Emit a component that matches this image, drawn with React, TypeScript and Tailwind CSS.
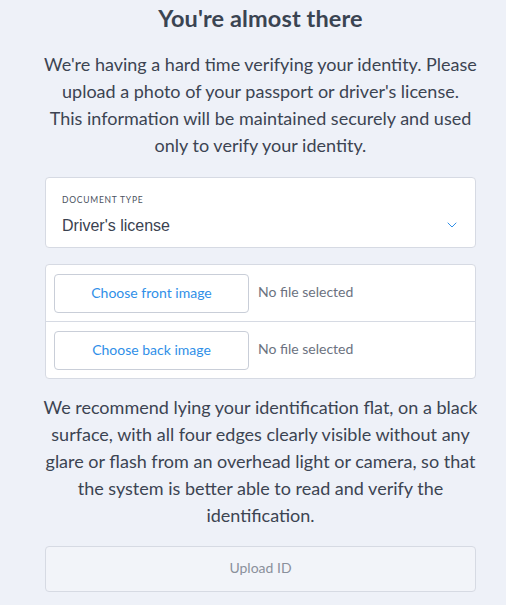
import { ChevronDown } from 'lucide-react';

const sans = "font-['Lato','Open_Sans',sans-serif]";

function FileRow({ label }: { label: string }) {
    return (
        <div className="flex h-[56px] items-center px-[8px]">
            <button className="h-[39px] w-[195px] rounded-[4px] border border-[#c9ced8] bg-white pb-[1px] text-[14px] text-[#2f8fe8]">
                {label}
            </button>
            <span className="ml-[9px] pb-[3px] text-[14px] text-[#6b7280]">No file selected</span>
        </div>
    );
}

export default function App() {
    return (
        <div className={`min-h-[605px] w-[506px] bg-[#eef1f8] pl-[45px] text-[#3c4452] ${sans}`}>
            <div className="w-[431px]">
                <h1 className="pt-[3px] text-center text-[23.5px] font-bold leading-[30px] tracking-[0.005em] text-[#3a4452]">
                    You're almost there
                </h1>

                <p className="-mx-[12px] mt-[18px] whitespace-nowrap text-center text-[18px] leading-[27px]">
                    We're having a hard time verifying your identity. Please
                    <br />
                    upload a photo of your passport or driver's license.
                    <br />
                    This information will be maintained securely and used
                    <br />
                    only to verify your identity.
                </p>

                <div className="mt-[18px] h-[71px] rounded-[4px] border border-[#d6dae3] bg-white px-[16px] pt-[17px]">
                    <div className="text-[8.5px] leading-[11px] uppercase tracking-[0.09em] text-[#4a5260]">
                        Document type
                    </div>
                    <div className="mt-[10px] flex items-center justify-between font-['Liberation_Sans',sans-serif]">
                        <span className="text-[16px] leading-[20px] text-[#3a4250]">Driver's license</span>
                        <ChevronDown size={16} strokeWidth={1.5} className="mr-[-1px] mb-[2px] text-[#2f8fe8]" />
                    </div>
                </div>

                <div className="mt-[16px] rounded-[4px] border border-[#d6dae3] bg-white">
                    <FileRow label="Choose front image" />
                    <div className="h-px bg-[#d6dae3]" />
                    <FileRow label="Choose back image" />
                </div>

                <p className="-mx-[12px] mt-[15px] whitespace-nowrap text-center text-[18px] leading-[27px]">
                    We recommend lying your identification flat, on a black
                    <br />
                    surface, with all four edges clearly visible without any
                    <br />
                    glare or flash from an overhead light or camera, so that
                    <br />
                    the system is better able to read and verify the
                    <br />
                    identification.
                </p>

                <button className="mt-[17px] h-[46px] w-full rounded-[4px] border border-[#d6dae3] bg-[#f2f4f9] pb-[3px] text-[14px] text-[#8a909b]">
                    Upload ID
                </button>
            </div>
        </div>
    );
}
